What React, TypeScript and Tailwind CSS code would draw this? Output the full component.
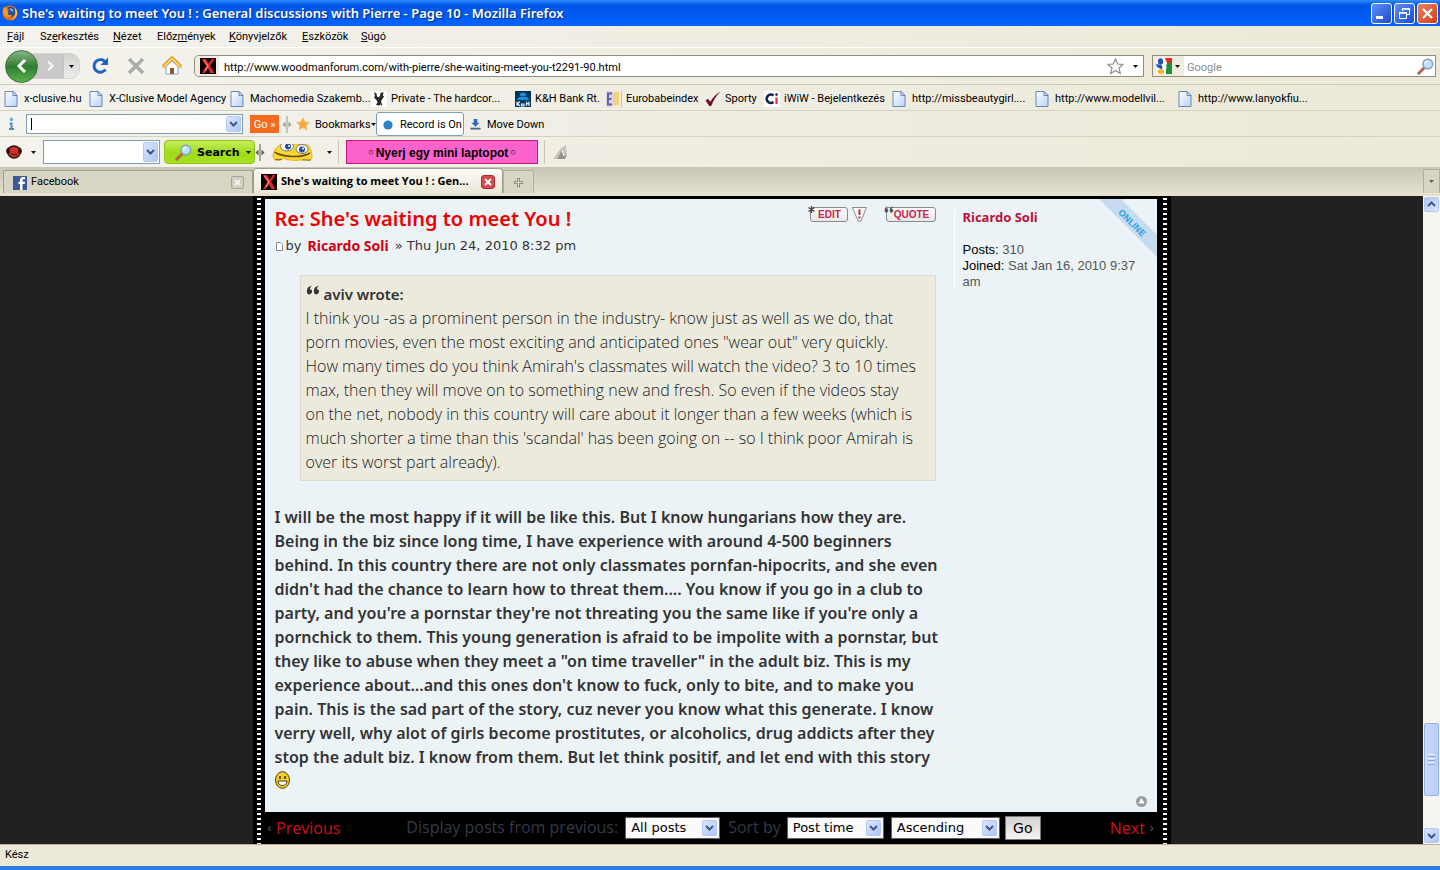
import React from "react";

const UI = "font-['Roboto','Liberation_Sans',sans-serif] text-[11px]";
const BODY = "font-['Noto_Sans','Open_Sans',sans-serif]";
const PLAIN = "font-['Open_Sans','Noto_Sans',sans-serif]";

function Firefox() {
  return (
    <svg className="size-4 flex-none" viewBox="0 0 16 16">
      <circle cx="8" cy="8" r="7.5" fill="#e66a10" />
      <circle cx="8.6" cy="6.8" r="5" fill="#2a4f9c" />
      <path d="M8 3c2 .5 3.500 1.500 3.800 3.600-1-.8-2-.9-2.600-.4C8.200 5.500 7.500 4 8 3z" fill="#7fb4ea" />
      <path d="M.8 4.500C1.500 2.800 2.300 2 3 1.500c0 1 .5 1.500 1.500 1.700 1.200.2 2 .8 2.300 1.500-.8.2-1.500.6-1.800 1.400.8 0 1.500.3 1.900.9-.9.2-1.200 1-1 1.900.4 1.400 2.700 1.600 4.200.6-.6 1.800-2.400 2.900-4.600 2.700C2.500 11.800.3 8.500.8 4.500z" fill="#f89b1c" />
      <path d="M12.500 2.500c2.400 2 3 5 2.200 7.600-.8 3-3.600 5-6.700 5.200 3.400-1 5.300-3.500 5.400-6.600.1-2.300-.1-4.500-.9-6.200z" fill="#ffd84a" />
    </svg>
  );
}

function XIcon() {
  return (
    <svg className="size-4 flex-none" viewBox="0 0 16 16">
      <rect width="16" height="16" fill="#0a0000" />
      <path d="M2 1h4l2.700 4.500 3-4.500h2.800l-4.300 7 4.300 7h-4l-2.700-4.700-3 4.700H2l4.300-7z" fill="#d8262c" />
      <path d="M3.500 2l4.500 6-3 5" stroke="#ff8a80" strokeWidth="1.200" fill="none" />
    </svg>
  );
}

function PageIcon() {
  return (
    <svg className="h-4 w-[14px] flex-none" viewBox="0 0 14 16">
      <defs>
        <linearGradient id="pg" x1="0" y1="0" x2="1" y2="1">
          <stop offset="0" stopColor="#fff" />
          <stop offset="1" stopColor="#b8d2f5" />
        </linearGradient>
      </defs>
      <path d="M1 .5h8L13 4.500v11H1z" fill="url(#pg)" stroke="#6a86b8" />
      <path d="M9 .5v4h4z" fill="#dfeafa" stroke="#6a86b8" />
    </svg>
  );
}

function Caret({ className = "" }: { className?: string }) {
  return (
    <svg className={"h-[3px] w-[5px] flex-none " + className} viewBox="0 0 5 3">
      <path d="M0 0h5L2.500 3z" fill="#111" />
    </svg>
  );
}

function Chevron({ className = "" }: { className?: string }) {
  return (
    <span className={"pointer-events-none flex items-center justify-center rounded-[2px] border border-[#b4c8f4] bg-linear-to-br from-[#dbe6fd] to-[#afc6f6] " + className}>
      <svg className="h-[6px] w-[9px]" viewBox="0 0 9 6">
        <path d="M1 1l3.500 3.500L8 1" fill="none" stroke="#40577f" strokeWidth="2" />
      </svg>
    </span>
  );
}

function Magnifier() {
  return (
    <svg className="size-[17px] flex-none" viewBox="0 0 17 17">
      <path d="M1.800 15.200l5.400-5.400" stroke="#b5634c" strokeWidth="3" strokeLinecap="round" />
      <circle cx="10.800" cy="6" r="4.800" fill="#bfe2f8" stroke="#7f9dbf" strokeWidth="1.400" />
      <path d="M8 5.500c.5-1.500 1.500-2.200 3-2.300" stroke="#fff" strokeWidth="1.400" fill="none" />
    </svg>
  );
}

function Grip({ color }: { color: string }) {
  return (
    <svg className="h-[17px] w-[10px] flex-none" viewBox="0 0 10 17">
      <path d="M5 0v17" stroke={color} />
      <path d="M3.500 5.500v6L.5 8.500zM6.500 5.500v6l3-3z" fill={color} />
    </svg>
  );
}

const menus: [string, string, string, string][] = [
  ["", "F", "ájl", "w-[33px]"],
  ["Sz", "e", "rkesztés", "w-[73px]"],
  ["", "N", "ézet", "w-[44px]"],
  ["Előz", "m", "ények", "w-[72px]"],
  ["", "K", "önyvjelzők", "w-[73px]"],
  ["", "E", "szközök", "w-[59px]"],
  ["", "S", "úgó", "w-[40px]"],
];

const privateIcon = (
  <svg className="size-4" viewBox="0 0 16 16">
    <rect width="16" height="16" fill="#fff" />
    <path d="M3 1l2.500 1.500.5 3 1.500.8L9 5l.5-3L12.500 1l-.6 3.500 1.200 1L11 8.500l-1 2 1.500 4.500-2.300-1.500L8 14.500 5 14l1.500-2.700L5.500 9 3 6.500l1-1.500z" fill="#2a2a2a" />
  </svg>
);
const khIcon = (
  <svg className="size-4" viewBox="0 0 16 16">
    <rect width="16" height="16" fill="#00355f" />
    <ellipse cx="8" cy="3.500" rx="3" ry="2" fill="#1b8fd0" />
    <path d="M1.500 9l2.500-3h8l2.500 3z" fill="#1b8fd0" />
    <path d="M2 10.500v4.500M5 10.500l-2.500 2.200L5 15M6.500 15v-2h2.500v2zM11.500 10.500v4.500M14 10.500v4.500M11.500 12.700H14" stroke="#e8f4fb" strokeWidth="1.200" fill="none" />
  </svg>
);
const euroIcon = (
  <svg className="size-4" viewBox="0 0 16 16">
    <rect width="16" height="16" fill="#f4ecc8" />
    <rect width="7" height="16" fill="#d9d4e6" />
    <path d="M6 2.500H2v11h4M2 8h3.500" stroke="#6462a0" strokeWidth="2" fill="none" />
    <rect x="7" y="1" width="6" height="13" fill="#f1d27e" />
    <path d="M15.500 0v16" stroke="#c9c2a6" />
  </svg>
);
const checkIcon = (
  <svg className="size-4" viewBox="0 0 16 16">
    <path d="M.5 9.500L3 7.800l2.200 3C8 6.500 11 3 15.500.5 11.500 4.500 8.500 9 6.200 15L4.500 15.300z" fill="#6e0f33" />
  </svg>
);
const iwiwIcon = (
  <svg className="size-4" viewBox="0 0 16 16">
    <rect width="16" height="16" rx="2" fill="#fff" />
    <path d="M9.500 4.500A4.200 4.200 0 1 0 9.500 11" stroke="#17254f" strokeWidth="2.600" fill="none" />
    <path d="M12.500 6.500V13" stroke="#d9304a" strokeWidth="2.200" />
    <circle cx="12.500" cy="3.600" r="1.300" fill="#17254f" />
  </svg>
);

const bookmarks: { label: string; w: string; icon?: React.ReactNode }[] = [
  { label: "x-clusive.hu", w: "w-[85px]" },
  { label: "X-Clusive Model Agency", w: "w-[141px]" },
  { label: "Machomedia Szakemb...", w: "w-[141px]" },
  { label: "Private - The hardcor...", w: "w-[144px]", icon: privateIcon },
  { label: "K&H Bank Rt.", w: "w-[91px]", icon: khIcon },
  { label: "Eurobabeindex", w: "w-[99px]", icon: euroIcon },
  { label: "Sporty", w: "w-[59px]", icon: checkIcon },
  { label: "iWiW - Bejelentkezés", w: "w-[128px]", icon: iwiwIcon },
  { label: "http://missbeautygirl....", w: "w-[143px]" },
  { label: "http://www.modellvil...", w: "w-[143px]" },
  { label: "http://www.lanyokfiu...", w: "w-[143px]" },
];

const quoteLines = [
  "I think you -as a prominent person in the industry- know just as well as we do, that",
  "porn movies, even the most exciting and anticipated ones \"wear out\" very quickly.",
  "How many times do you think Amirah's classmates will watch the video? 3 to 10 times",
  "max, then they will move on to something new and fresh. So even if the videos stay",
  "on the net, nobody in this country will care about it longer than a few weeks (which is",
  "much shorter a time than this 'scandal' has been going on -- so I think poor Amirah is",
  "over its worst part already).",
];

const postLines = [
  "I will be the most happy if it will be like this. But I know hungarians how they are.",
  "Being in the biz since long time, I have experience with around 4-500 beginners",
  "behind. In this country there are not only classmates pornfan-hipocrits, and she even",
  "didn't had the chance to learn how to threat them.... You know if you go in a club to",
  "party, and you're a pornstar they're not threating you the same like if you're only a",
  "pornchick to them. This young generation is afraid to be impolite with a pornstar, but",
  "they like to abuse when they meet a \"on time traveller\" in the adult biz. This is my",
  "experience about...and this ones don't know to fuck, only to bite, and to make you",
  "pain. This is the sad part of the story, cuz never you know what this generate. I know",
  "verry well, why alot of girls become prostitutes, or alcoholics, drug addicts after they",
  "stop the adult biz. I know from them. But let think positif, and let end with this story",
];

function TitleBar() {
  const btn = "flex size-[21px] items-center justify-center rounded-[3px] border border-white";
  return (
    <header className="flex h-[26px] flex-none items-center bg-linear-to-b from-[#2f8cff] via-[#0055e6] via-20% to-[#0064ff] pr-[2px] pl-[2px]">
      <Firefox />
      <h1 className={BODY + " ml-[4px] flex-1 text-[13px] leading-[26px] font-semibold whitespace-nowrap text-white [text-shadow:1px_1px_1px_#0a2a80]"}>
        She's waiting to meet You ! : General discussions with Pierre - Page 10 - Mozilla Firefox
      </h1>
      <div className="flex gap-[2px]">
        <button aria-label="Minimize" className={btn + " bg-linear-to-br from-[#5f8ff5] to-[#1e49d0]"}>
          <svg className="size-[15px]" viewBox="0 0 15 15"><path d="M2 11.500h7" stroke="#fff" strokeWidth="3" /></svg>
        </button>
        <button aria-label="Restore" className={btn + " bg-linear-to-br from-[#5f8ff5] to-[#1e49d0]"}>
          <svg className="size-[15px]" viewBox="0 0 15 15" fill="none" stroke="#fff">
            <path d="M5.500 5V2.500h7v6H10" /><path d="M5 3h8" strokeWidth="1.500" />
            <path d="M2.500 6.500h7v6h-7z" /><path d="M2 7h8" strokeWidth="1.500" />
          </svg>
        </button>
        <button aria-label="Close" className={btn + " bg-linear-to-br from-[#ec8260] to-[#d03a12]"}>
          <svg className="size-[15px]" viewBox="0 0 15 15"><path d="M3 3l9 9M12 3l-9 9" stroke="#fff" strokeWidth="2.200" /></svg>
        </button>
      </div>
    </header>
  );
}

function NavBar() {
  return (
    <div className="flex h-[38px] flex-none items-center border-t border-b border-t-white border-b-[#d0ccba] pr-1">
      <div className="flex h-[32px] w-[80px] flex-none items-center pl-[5px]">
        <button aria-label="Back" className="z-10 flex size-[33px] flex-none items-center justify-center rounded-full border border-[#3c6e3c] bg-linear-to-b from-[#86b686] via-[#2f7d31] to-[#5cb04e]">
          <svg className="size-4" viewBox="0 0 16 16"><path d="M11 2L5 8l6 6" fill="none" stroke="#fff" strokeWidth="3" /></svg>
        </button>
        <div className="-ml-2 flex h-[26px] flex-1 items-center rounded-r-[10px] border border-[#d5d5d0] bg-linear-to-b from-[#d2d2d0] to-[#ececea]">
          <button aria-label="Forward" className="flex h-full w-[33px] items-center justify-end border-r border-[#c4c4c0] bg-[#c9c9c9] pr-1">
            <svg className="size-4" viewBox="0 0 16 16"><path d="M5 3.500L9.500 8 5 12.500" fill="none" stroke="#f4f4f4" strokeWidth="2.400" /></svg>
          </button>
          <Caret className="ml-[5px]" />
        </div>
      </div>
      <button aria-label="Reload" className="ml-[10px] size-5">
        <svg viewBox="0 0 20 20"><path d="M15.500 13.500A6.300 6.300 0 1 1 14.800 5.500" fill="none" stroke="#1e62c8" strokeWidth="3" /><path d="M18 1.500v7.500h-7.500z" fill="#1e62c8" /></svg>
      </button>
      <button aria-label="Stop" className="ml-4 size-5">
        <svg viewBox="0 0 20 20"><path d="M3 3l14 14M17 3L3 17" stroke="#ababab" strokeWidth="3.400" /></svg>
      </button>
      <button aria-label="Home" className="ml-4 size-5">
        <svg viewBox="0 0 20 20">
          <path d="M4 10.500L10 5l6 5.500V18H4z" fill="#fff" stroke="#7fa2d6" />
          <path d="M1 11L10 2l9 9" fill="none" stroke="#d88f14" strokeWidth="3.400" strokeLinejoin="round" />
          <path d="M1.500 11L10 2.500l8.500 8.500" fill="none" stroke="#ffd667" strokeWidth="2" strokeLinejoin="round" />
          <path d="M8 18v-6h4v6z" fill="#8a5a2c" />
        </svg>
      </button>
      <div className="ml-3 flex h-[22px] flex-1 items-center rounded-l-[5px] border border-[#8f8d80] bg-white">
        <span className="flex h-full w-[24px] flex-none items-center justify-center rounded-l-[5px] bg-[#f0ede0] pl-[2px]"><XIcon /></span>
        <input aria-label="Address" className={UI + " ml-[5px] h-full min-w-0 flex-1 bg-transparent pt-[2px] text-black outline-none"} defaultValue="http://www.woodmanforum.com/with-pierre/she-waiting-meet-you-t2291-90.html" />
        <svg className="mr-[9px] size-[17px] flex-none" viewBox="0 0 17 17"><path d="M8.500 1l2.200 5 5.300.4-4 3.600 1.300 5.400-4.800-2.900-4.800 2.900L5 10 1 6.400 6.300 6z" fill="#fff" stroke="#8e8e8e" strokeWidth="1.200" /></svg>
        <Caret className="mr-[5px]" />
      </div>
      <div className="ml-2 flex h-[22px] w-[284px] flex-none items-center border border-[#8f8d80] bg-white pr-[1px]">
        <span className="flex h-full w-[31px] flex-none items-center gap-[3px] bg-[#f0ede0] pl-[3px]">
          <svg className="size-4" viewBox="0 0 16 16">
            <rect width="16" height="16" fill="#fff" />
            <path d="M9 0h7v5h-5z" fill="#e02d20" /><path d="M11 5h5v11H10V9z" fill="#1c8f3c" />
            <ellipse cx="4.500" cy="3.500" rx="2.600" ry="3.200" fill="#2553b8" /><path d="M0 6l5 1 3 3-2 1.500-5-2.500z" fill="#2553b8" />
            <path d="M7 6.500l4 3-3 3-2-2z" fill="#fff" />
            <ellipse cx="5" cy="13.500" rx="3.300" ry="2.300" fill="#efb71e" />
          </svg>
          <Caret />
        </span>
        <input aria-label="Search the web" placeholder="Google" className={UI + " ml-[3px] h-full min-w-0 flex-1 bg-transparent pt-[2px] outline-none placeholder:text-[#8c8c8c]"} />
        <Magnifier />
      </div>
    </div>
  );
}

function Toolbars() {
  return (
    <>
      <div className="flex h-[26px] flex-none items-center border-b border-[#d6d2c0] pt-px pl-[7px]">
        <svg className="h-4 w-[9px] flex-none" viewBox="0 0 9 16"><circle cx="4.500" cy="3.500" r="1.800" fill="#56b5e0" /><path d="M4.500 6.500V13M2.500 7.500h2M2 13h5" stroke="#4a93bd" strokeWidth="2" fill="none" /></svg>
        <div className="ml-[10px] grid h-[20px] w-[217px] flex-none grid-cols-1 grid-rows-1">
          <input aria-label="Toolbar search" defaultValue="" className="col-start-1 row-start-1 h-full min-h-0 w-full min-w-0 border border-[#7f9db9] bg-white px-1" />
          <span className="col-start-1 row-start-1 my-[4px] ml-[5px] w-px bg-black" />
          <Chevron className="col-start-1 row-start-1 m-[2px] w-[15px] justify-self-end" />
        </div>
        <button className={UI + " ml-[7px] h-[18px] w-[29px] flex-none bg-[#f56a1e] leading-[17px] text-white"}>Go »</button>
        <span className="ml-[3px]"><Grip color="#9a9a90" /></span>
        <svg className="ml-1 size-[14px] flex-none" viewBox="0 0 14 14"><path d="M7 .8l1.900 4.100 4.500.5-3.400 3 1 4.500L7 10.600l-4 2.300 1-4.500-3.400-3 4.500-.5z" fill="#f9a63a" stroke="#eec07a" /></svg>
        <button className={UI + " ml-[5px] flex w-[61px] flex-none items-center pt-[2px] whitespace-nowrap"}>Bookmarks<Caret className="mb-[2px]" /></button>
        <button className={UI + " flex h-[24px] w-[88px] flex-none items-center rounded-[3px] border border-[#7f9db9] bg-white pt-[3px] pl-[6px] whitespace-nowrap"}>
          <svg className="mr-[7px] mb-[2px] size-[10px] flex-none" viewBox="0 0 10 10"><circle cx="5" cy="5" r="4.600" fill="#2b83cc" /></svg>
          Record is On
        </button>
        <button className={UI + " ml-[6px] flex items-center gap-[6px] pt-[2px] whitespace-nowrap"}>
          <svg className="mb-[2px] size-[11px]" viewBox="0 0 11 12"><path d="M3.500 0h4v4H10L5.500 8.500 1 4h2.500z" fill="#2d6cc0" /><path d="M0 10.500h11" stroke="#44688f" strokeWidth="2" /></svg>
          Move Down
        </button>
      </div>
      <div className="flex h-[30px] flex-none items-center pl-[6px]">
        <svg className="size-4 flex-none" viewBox="0 0 16 16"><ellipse cx="8" cy="7" rx="8" ry="5" fill="#3a1512" /><circle cx="8" cy="8" r="6.800" fill="#2b0f0f" /><ellipse cx="8" cy="6" rx="4.500" ry="3" fill="#d6322c" /><ellipse cx="8" cy="10" rx="5.200" ry="3.300" fill="#c32a28" /><path d="M5 10.500h6" stroke="#551111" /></svg>
        <Caret className="ml-[9px]" />
        <div className="ml-[7px] grid h-[24px] w-[117px] flex-none grid-cols-1 grid-rows-1">
          <input aria-label="Search terms" className="col-start-1 row-start-1 h-full min-h-0 w-full min-w-0 border border-[#7f9db9] bg-white px-1" />
          <Chevron className="col-start-1 row-start-1 m-[2px] w-[15px] justify-self-end" />
        </div>
        <button className="ml-1 flex h-[24px] w-[91px] flex-none items-center rounded-[4px] border border-[#94c11a] bg-linear-to-b from-[#c6ee58] via-[#9fdc14] to-[#a6e020] pl-[10px] font-['DejaVu_Sans',sans-serif] text-[11px] font-bold">
          <Magnifier /><span className="ml-[5px] flex-1 pt-[2px] text-left">Search</span><Caret className="mr-[3px]" />
        </button>
        <Grip color="#5c5c56" />
        <svg className="ml-[7px] h-[17px] w-[41px]" viewBox="0 0 41 17">
          <path d="M1 13C1 6 6 0 12 0h20c5 0 8 5 8 14-1 3-5 3-7 1-6 2-16 2-22-1-2 3-6 3-8 2z" fill="#f8d832" stroke="#d9a818" strokeWidth=".8" />
          <path d="M4 9c8 4 24 5 32 1M4 9l-1.500-1M36 10l2-1" stroke="#6b4a10" strokeWidth="1.400" fill="none" />
          <ellipse cx="15" cy="2.500" rx="6.500" ry="4.500" fill="#f4f8ff" stroke="#777" /><ellipse cx="30" cy="5" rx="6" ry="4.500" fill="#f4f8ff" stroke="#777" />
          <circle cx="16" cy="2.500" r="3" fill="#2a4f94" /><circle cx="30" cy="5.500" r="3" fill="#2a4f94" />
          <circle cx="17" cy="2" r="1" fill="#fff" /><circle cx="31" cy="4.500" r="1" fill="#fff" />
          <path d="M3 15.500h7M30 16h9" stroke="#8a6b18" />
        </svg>
        <Caret className="ml-[14px]" />
        <span className="ml-[6px] h-6 w-px bg-[#cbc7b5]" />
        <a href="#laptop" className="ml-[7px] flex h-[24px] w-[192px] items-center justify-center gap-[2px] border border-[#c2187c] bg-[#fb62cb] pt-px font-['Liberation_Sans',sans-serif] text-[12px] font-bold whitespace-nowrap text-black">
          <span className="text-[9px] font-normal">○</span>Nyerj egy mini laptopot<span className="text-[9px] font-normal">○</span>
        </a>
        <span className="ml-[6px] h-6 w-px bg-[#cbc7b5]" />
        <svg className="ml-2 size-[15px]" viewBox="0 0 15 15"><path d="M0 14L8 3l5-3 1 10-2 4z" fill="#c9c7bd" /><path d="M4 14l5-9 2 6 3-1-2 4z" fill="#96948c" /><path d="M9 5l2 6" stroke="#fff" /></svg>
      </div>
    </>
  );
}

function Tabs() {
  return (
    <nav className="flex h-[29px] flex-none items-end border-b-[3px] border-[#e4e1cf] bg-linear-to-b from-[#c9c5b4] to-[#e3e0d0] pl-[3px]">
      <button className={UI + " flex h-[23px] w-[250px] items-center rounded-t-[2px] border border-b-0 border-[#9f9c8c] bg-[#d8d5c5] pt-px pr-2 pl-[9px] text-left"}>
        <svg className="size-[14px]" viewBox="0 0 14 14"><rect width="14" height="14" fill="#3b5998" /><path d="M12 3.200h-1.500c-.8 0-1 .4-1 1.100v1.400H12L11.700 8H9.500v6H7V8H5.500V5.700H7V4c0-2 1.200-3 3-3h2z" fill="#fff" /></svg>
        <span className="ml-1 flex-1">Facebook</span>
        <span className="flex size-[13px] items-center justify-center rounded-[2px] border border-[#a9a698] bg-[#d2cfc0]">
          <svg className="size-[7px]" viewBox="0 0 7 7"><path d="M1 1l5 5M6 1L1 6" stroke="#f4f4ee" strokeWidth="2" /></svg>
        </span>
      </button>
      <button className={PLAIN + " flex h-[25px] w-[250px] items-center rounded-t-[4px] border border-b-0 border-[#9f9c8c] bg-linear-to-b from-[#fcfbf6] to-[#ebe8d8] pt-px pr-[7px] pl-[7px] text-left text-[11px] font-bold"}>
        <XIcon />
        <span className="ml-1 flex-1 whitespace-nowrap">She's waiting to meet You ! : Gen...</span>
        <span className="flex size-[14px] items-center justify-center rounded-[3px] border border-[#a63030] bg-[#d6484a]">
          <svg className="size-[8px]" viewBox="0 0 8 8"><path d="M1 1l6 6M7 1L1 7" stroke="#fff" strokeWidth="2" /></svg>
        </span>
      </button>
      <button aria-label="New tab" className="flex h-[23px] w-[31px] items-center justify-center rounded-t-[2px] border border-b-0 border-[#b1ae9e] bg-[#d8d5c5]">
        <svg className="size-[9px]" viewBox="0 0 9 9"><path d="M4.500 0v9M0 4.500h9" stroke="#8c8a7e" strokeWidth="3" /><path d="M4.500 1v7M1 4.500h7" stroke="#e8e6da" /></svg>
      </button>
      <span className="flex-1" />
      <button aria-label="List tabs" className="flex h-[24px] w-[17px] items-center justify-center border border-b-0 border-[#b1ae9e] bg-[#d8d5c5]"><Caret className="opacity-60" /></button>
    </nav>
  );
}

function Sprockets() {
  return <div className="w-1 flex-none bg-[repeating-linear-gradient(to_bottom,#000_0px,#000_2px,#fff_2px,#fff_4px,#000_4px,#000_5px)]" />;
}

const quoteGlyph = (
  <svg className="h-[10px] w-[14px]" viewBox="0 0 15 10">
    <path d="M6.500.3C4.800 1.300 4.200 2.800 4.200 4.300 5.800 4.300 6.700 5.500 6.500 7 6.300 8.700 5 9.700 3.600 9.700 1.800 9.700.8 8.200.9 6 1 3.200 3 .8 6.500.3z" />
    <path d="M14 .3c-1.700 1-2.300 2.500-2.300 4 1.600 0 2.500 1.200 2.300 2.700-.2 1.700-1.500 2.700-2.900 2.700-1.800 0-2.800-1.500-2.700-3.700C8.500 3.200 10.500.8 14 .3z" />
  </svg>
);

function PostButton({ label, mark, w }: { label: string; mark: React.ReactNode; w: string }) {
  return (
    <button className={"relative flex h-[15px] flex-none items-center justify-center rounded-[3px] border border-[#8b8b8b] bg-linear-to-b from-white to-[#e6e6e6] pl-[2px] font-['Liberation_Sans',sans-serif] text-[10px] font-bold text-[#c8254d] " + w}>
      <span className="absolute -top-[2px] -left-[3px] fill-[#555]">{mark}</span>
      {label}
    </button>
  );
}

function PostSelect({ id, label, value, options, w }: { id: string; label?: string; value: string; options: string[]; w: string }) {
  return (
    <span className={"grid h-[22px] flex-none grid-cols-1 grid-rows-1 " + w}>
      <select id={id} aria-label={label} defaultValue={value} className="col-start-1 row-start-1 min-w-0 appearance-none border border-[#5f5f5f] bg-[#fafafa] pl-[5px] font-['DejaVu_Sans',sans-serif] text-[13px] text-black">
        {options.map((o) => <option key={o}>{o}</option>)}
      </select>
      <Chevron className="col-start-1 row-start-1 m-[3px] w-[15px] justify-self-end" />
    </span>
  );
}

function Post() {
  return (
    <article className="flex flex-1 bg-[#ecf3f7]">
      <div className="flex min-w-0 flex-1 flex-col pt-[8px] pl-[10px]">
        <div className="flex pr-[6px]">
          <h2 className={BODY + " flex-1 text-[20px] leading-[24px] font-semibold whitespace-nowrap text-[#ee0000]"}>Re: She's waiting to meet You !</h2>
          <PostButton label="EDIT" w="w-[38px]" mark={<svg className="size-[7px]" viewBox="0 0 7 7"><path d="M3.500 0v7M.5 1.500l6 4M6.500 1.500l-6 4" stroke="#444" strokeWidth="1.300" /></svg>} />
          <button aria-label="Report" className="ml-[3px] h-[15px]">
            <svg className="h-[15px] w-[17px]" viewBox="0 0 17 15"><path d="M1.500.5h14l-5.500 13.500h-3z" fill="#fafafa" stroke="#8b8b8b" strokeLinejoin="round" /><path d="M8.500 2.500v5.500M8.500 9.500v2" stroke="#c8254d" strokeWidth="2" /></svg>
          </button>
          <span className="w-[18px]" />
          <PostButton label="QUOTE" w="w-[50px]" mark={<span className="block [&>svg]:h-[7px] [&>svg]:w-[10px]">{quoteGlyph}</span>} />
        </div>
        <p className="mt-[5px] flex items-center font-['DejaVu_Sans',sans-serif] text-[13px] leading-[20px] whitespace-pre text-[#333]">
          <svg className="mr-[2px] h-[9px] w-[9px]" viewBox="0 0 9 9"><path d="M1.500.5h4l2 2v6h-6z" fill="#fff" stroke="#888" /></svg>
          by <a href="#ricardo" className={BODY + " mx-[2px] text-[14px] font-bold text-[#d00010]"}>Ricardo Soli</a> » Thu Jun 24, 2010 8:32 pm
        </p>
        <blockquote className="mt-[19px] mr-[6px] ml-[25px] border border-[#dbdbce] bg-[#ebeadd] px-[5px] pt-[6px] pb-[6px] text-[#333]">
          <cite className={BODY + " flex items-center gap-1 text-[15px] leading-[24px] font-semibold text-[#333] not-italic"}>
            <span className="fill-[#333] pb-2">{quoteGlyph}</span>
            aviv wrote:
          </cite>
          <p className={PLAIN + " text-[16px] leading-[24px] font-light whitespace-nowrap text-[#222]"}>
            {quoteLines.map((l) => <span key={l} className="block">{l}</span>)}
          </p>
        </blockquote>
        <div className={BODY + " mt-6 text-[16px] leading-[24px] font-semibold whitespace-nowrap text-[#333]"}>
          {postLines.map((l) => <span key={l} className="block">{l}</span>)}
          <svg className="mt-[2px] h-[18px] w-[15px]" viewBox="0 0 15 18">
            <ellipse cx="7.500" cy="9" rx="7" ry="8.300" fill="#f5cf2c" stroke="#4d3d08" />
            <path d="M5 5v3M10 5v3" stroke="#3a2c00" strokeWidth="1.500" /><path d="M3 10h9c0 3-2 4.500-4.500 4.500S3 13 3 10z" fill="#fff" stroke="#4d3d08" />
          </svg>
        </div>
      </div>
      <div className="flex w-[215px] flex-none flex-col pt-[10px]">
        <dl className="ml-[12px] border-l border-white pl-2 font-['Liberation_Sans',sans-serif] text-[13px] leading-[16px] text-[#555]">
          <dt className={BODY + " mb-[17px] text-[13px] font-bold text-[#bc0f3b]"}>Ricardo Soli</dt>
          <dd><span className="text-black">Posts:</span> 310</dd>
          <dd><span className="text-black">Joined:</span> Sat Jan 16, 2010 9:37<br />am</dd>
        </dl>
        <span className="flex-1" />
        <a href="#top" aria-label="Top" className="mr-[10px] mb-[5px] self-end">
          <svg className="size-[11px]" viewBox="0 0 11 11"><circle cx="5.500" cy="5.500" r="5.500" fill="#9a9ea0" /><path d="M5.500 2L8.500 7.500h-6z" fill="#fff" /></svg>
        </a>
      </div>
      <svg className="absolute top-0 right-0 size-[58px]" viewBox="0 0 58 58">
        <path d="M0 0h22l36 36v22z" fill="#c5dcf0" />
        <text x="0" y="3" transform="translate(33 24) rotate(45)" textAnchor="middle" fontFamily="Liberation Sans" fontWeight="bold" fontSize="9" fill="#2aa0e0">ONLINE</text>
      </svg>
    </article>
  );
}

function Pager() {
  const label = PLAIN + " pb-[2px] text-[16px] leading-[24px] text-[#343a46]";
  const link = PLAIN + " flex items-center text-[16px] text-[#d01018]";
  const arrow = "text-[12px] text-[#667]";
  return (
    <footer className="flex h-8 flex-none items-center bg-black px-[3px] whitespace-nowrap">
      <a href="#prev" className={link}><span className={arrow + " mr-[5px]"}>‹</span>Previous</a>
      <span className="flex-1" />
      <label htmlFor="posts" className={label}>Display posts from previous:</label>
      <span className="w-[7px]" />
      <PostSelect id="posts" value="All posts" options={["All posts", "1 day", "7 days"]} w="w-[95px]" />
      <label htmlFor="sort" className={label + " mr-[6px] ml-[8px]"}>Sort by</label>
      <PostSelect id="sort" value="Post time" options={["Author", "Post time", "Subject"]} w="w-[97px]" />
      <span className="w-[7px]" />
      <PostSelect id="direction" label="Sort direction" value="Ascending" options={["Ascending", "Descending"]} w="w-[109px]" />
      <button className="ml-[5px] h-[24px] w-[36px] flex-none border border-[#777] bg-linear-to-b from-[#d2d2d2] to-[#f4f4f4] font-['DejaVu_Sans',sans-serif] text-[14px] text-black">Go</button>
      <span className="w-[69px]" />
      <a href="#next" className={link}>Next<span className={arrow + " ml-[5px]"}>›</span></a>
    </footer>
  );
}

function ScrollBar() {
  return (
    <div className="flex w-[17px] flex-none flex-col bg-[#f6f5ef]">
      <Chevron className="m-[1px] h-[15px] rotate-180" />
      <span className="flex-[510_1_0%]" />
      <div className="m-[1px] flex h-[73px] flex-none flex-col items-center justify-center gap-[1px] rounded-[2px] border border-[#98b0e8] bg-linear-to-r from-[#cbdafd] to-[#b9cdfb]">
        <span className="h-px w-[7px] bg-[#eef4ff]" /><span className="h-px w-[7px] bg-[#8ca6e0]" />
        <span className="h-px w-[7px] bg-[#eef4ff]" /><span className="h-px w-[7px] bg-[#8ca6e0]" />
        <span className="h-px w-[7px] bg-[#eef4ff]" /><span className="h-px w-[7px] bg-[#8ca6e0]" />
      </div>
      <span className="flex-[30_1_0%]" />
      <Chevron className="m-[1px] h-[15px]" />
    </div>
  );
}

export default function App() {
  return (
    <div className="flex min-h-screen flex-col overflow-hidden bg-linear-to-r from-[#f3f2ec] to-[#ece9d8] text-black">
      <TitleBar />
      <nav className={UI + " flex h-[21px] flex-none items-center pt-px pl-[7px]"}>
        {menus.map(([a, u, b, w]) => (
          <button key={a + u + b} className={"flex-none text-left whitespace-nowrap " + w}>{a}<span className="underline">{u}</span>{b}</button>
        ))}
      </nav>
      <NavBar />
      <nav className={UI + " flex h-[26px] flex-none items-center border-b border-[#d6d2c0] pt-[2px] pl-[4px]"}>
        {bookmarks.map((b) => (
          <a key={b.label} href={"#" + b.label} className={"flex flex-none items-center whitespace-nowrap " + b.w}>
            <span className="w-[20px] flex-none">{b.icon ?? <PageIcon />}</span>
            <span className="pt-[2px]">{b.label}</span>
          </a>
        ))}
      </nav>
      <Toolbars />
      <Tabs />
      <main className="flex flex-1 bg-[#212121]">
        <div className="flex flex-1 justify-center">
          <div className="flex w-[918px] bg-black px-[4px]">
            <Sprockets />
            <div className="mx-[4px] flex min-w-0 flex-1 flex-col pt-[3px] pr-[2px]">
              <div className="relative flex flex-1"><Post /></div>
              <Pager />
            </div>
            <Sprockets />
          </div>
        </div>
        <ScrollBar />
      </main>
      <footer className={UI + " flex h-[22px] flex-none items-center border-t border-[#b5b2a2] bg-[#ece9d8] pl-[5px]"}>Kész</footer>
      <div className="h-1 flex-none bg-[#2f7fe0]" />
    </div>
  );
}
